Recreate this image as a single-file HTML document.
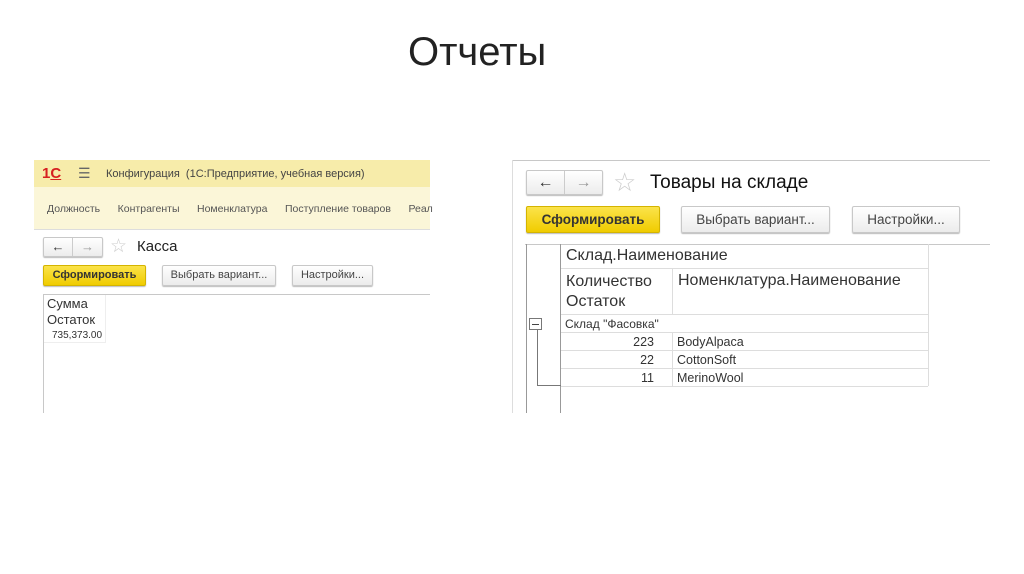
<!DOCTYPE html><html><head><meta charset="utf-8"><style>
*{margin:0;padding:0;box-sizing:border-box}
body{width:1024px;height:574px;background:#fff;position:relative;overflow:hidden;font-family:"Liberation Sans",sans-serif;color:#333}
.a{position:absolute;white-space:nowrap}
.btn{position:absolute;border:1px solid #c8c8c8;border-radius:2px;background:linear-gradient(#fff,#ececec);text-align:center;color:#444;box-shadow:0 1px 1px #bbb}
.y{background:linear-gradient(#fbe34a,#f0cc00);border-color:#d4b400;color:#333;font-weight:bold}
.l{position:absolute;background:#c8c8c8}
</style></head><body>
<div class="a" style="left:408px;top:30px;font-size:40px;color:#222">Отчеты</div>

<!-- left -->
<div class="a" style="left:34px;top:160px;width:396px;height:27px;background:#f7ecaa"></div>
<div class="a" style="left:42px;top:165px;font-size:15px;font-weight:bold;color:#d62020">1<span style="text-decoration:underline">C</span></div>
<div class="a" style="left:78px;top:165px;font-size:14px;color:#666">☰</div>
<div class="a" style="left:106px;top:168px;font-size:11px;color:#444">Конфигурация &nbsp;(1С:Предприятие, учебная версия)</div>
<div class="a" style="left:34px;top:187px;width:396px;height:43px;background:#fbf6d8;border-bottom:1px solid #ddd"></div>
<div class="a" style="left:47px;top:203px;font-size:10.5px;color:#555;word-spacing:0">Должность&nbsp;&nbsp;&nbsp;&nbsp;&nbsp;&nbsp;Контрагенты&nbsp;&nbsp;&nbsp;&nbsp;&nbsp;&nbsp;Номенклатура&nbsp;&nbsp;&nbsp;&nbsp;&nbsp;&nbsp;Поступление товаров&nbsp;&nbsp;&nbsp;&nbsp;&nbsp;&nbsp;Реал</div>
<div class="btn" style="left:43px;top:237px;width:60px;height:20px;font-size:13px;line-height:18px;font-weight:bold"><span style="display:inline-block;width:29px;border-right:1px solid #ccc;color:#333">←</span><span style="display:inline-block;width:29px;color:#999">→</span></div>
<div class="a" style="left:110px;top:235px;font-size:19px;color:#ccc">☆</div>
<div class="a" style="left:137px;top:238px;font-size:15px;color:#222">Касса</div>
<div class="btn y" style="left:43px;top:265px;width:103px;height:21px;font-size:11px;line-height:19px">Сформировать</div>
<div class="btn" style="left:162px;top:265px;width:114px;height:21px;font-size:11px;line-height:19px">Выбрать вариант...</div>
<div class="btn" style="left:292px;top:265px;width:81px;height:21px;font-size:11px;line-height:19px">Настройки...</div>
<div class="l" style="left:43px;top:294px;width:387px;height:1px"></div>
<div class="l" style="left:43px;top:294px;width:1px;height:119px"></div>
<div class="l" style="left:105px;top:295px;width:1px;height:48px;background:#eee"></div>
<div class="l" style="left:44px;top:342px;width:62px;height:1px;background:#eee"></div>
<div class="a" style="left:47px;top:296px;font-size:13px;line-height:16px">Сумма<br>Остаток</div>
<div class="a" style="left:52px;top:330px;font-size:10px">735,373.00</div>

<!-- right -->
<div class="l" style="left:512px;top:160px;width:478px;height:1px"></div>
<div class="l" style="left:512px;top:160px;width:1px;height:253px;background:#ddd"></div>
<div class="btn" style="left:526px;top:170px;width:77px;height:25px;font-size:16px;line-height:23px;font-weight:bold"><span style="display:inline-block;width:38px;border-right:1px solid #ccc;color:#333">←</span><span style="display:inline-block;width:37px;color:#999">→</span></div>
<div class="a" style="left:613px;top:167px;font-size:26px;color:#ccc">☆</div>
<div class="a" style="left:650px;top:172px;font-size:19px;color:#111">Товары на складе</div>
<div class="btn y" style="left:526px;top:206px;width:134px;height:27px;font-size:13.5px;line-height:25px">Сформировать</div>
<div class="btn" style="left:681px;top:206px;width:149px;height:27px;font-size:13.5px;line-height:25px">Выбрать вариант...</div>
<div class="btn" style="left:852px;top:206px;width:108px;height:27px;font-size:13.5px;line-height:25px">Настройки...</div>
<div class="l" style="left:525px;top:244px;width:465px;height:1px"></div>
<div class="l" style="left:526px;top:244px;width:1px;height:169px;background:#999"></div>
<div class="l" style="left:560px;top:244px;width:1px;height:169px;background:#999"></div>
<div class="l" style="left:928px;top:244px;width:1px;height:142px;background:#ddd"></div>
<div class="l" style="left:672px;top:268px;width:1px;height:46px;background:#ddd"></div>
<div class="l" style="left:672px;top:332px;width:1px;height:54px;background:#ddd"></div>
<div class="l" style="left:561px;top:268px;width:367px;height:1px;background:#ddd"></div>
<div class="l" style="left:561px;top:314px;width:367px;height:1px;background:#ddd"></div>
<div class="l" style="left:561px;top:332px;width:367px;height:1px;background:#ddd"></div>
<div class="l" style="left:561px;top:350px;width:367px;height:1px;background:#ddd"></div>
<div class="l" style="left:561px;top:368px;width:367px;height:1px;background:#ddd"></div>
<div class="l" style="left:561px;top:386px;width:367px;height:1px;background:#ddd"></div>
<div class="a" style="left:566px;top:247px;font-size:16px;color:#333">Склад.Наименование</div>
<div class="a" style="left:566px;top:272px;font-size:16px;line-height:20px;color:#333">Количество<br>Остаток</div>
<div class="a" style="left:678px;top:272px;font-size:16px;color:#333">Номенклатура.Наименование</div>
<div class="a" style="left:529px;top:318px;width:13px;height:12px;border:1px solid #777;background:#fff"></div>
<div class="l" style="left:532px;top:324px;width:7px;height:1px;background:#444"></div>
<div class="l" style="left:537px;top:330px;width:1px;height:56px;background:#777"></div>
<div class="l" style="left:537px;top:385px;width:24px;height:1px;background:#777"></div>
<div class="a" style="left:565px;top:317px;font-size:12px">Склад "Фасовка"</div>
<div class="a" style="left:600px;width:54px;text-align:right;top:335px;font-size:12.5px">223</div>
<div class="a" style="left:600px;width:54px;text-align:right;top:353px;font-size:12.5px">22</div>
<div class="a" style="left:600px;width:54px;text-align:right;top:371px;font-size:12.5px">11</div>
<div class="a" style="left:677px;top:335px;font-size:12.5px">BodyAlpaca</div>
<div class="a" style="left:677px;top:353px;font-size:12.5px">CottonSoft</div>
<div class="a" style="left:677px;top:371px;font-size:12.5px">MerinoWool</div>
</body></html>
